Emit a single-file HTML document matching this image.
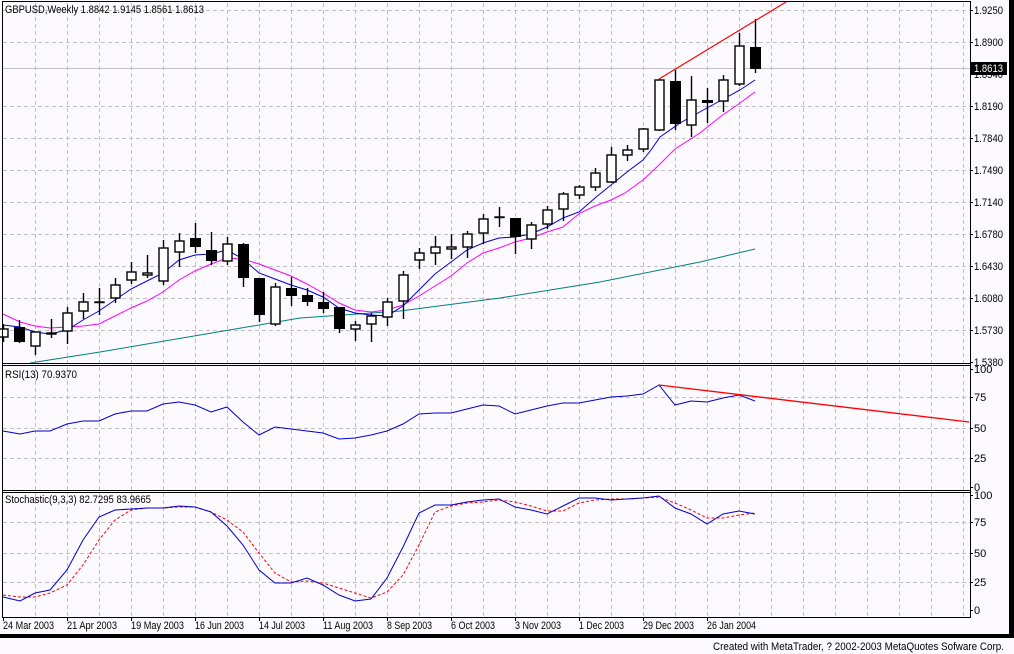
<!DOCTYPE html>
<html><head><meta charset="utf-8"><style>
html,body{margin:0;padding:0;background:#fcfaff;}
svg{display:block;font-family:"Liberation Sans",sans-serif;font-size:11px;}
</style></head><body>
<svg width="1014" height="654" viewBox="0 0 1014 654" xmlns="http://www.w3.org/2000/svg">
<rect width="1014" height="654" fill="#fcfaff"/>
<g stroke="#c0c0c0" stroke-dasharray="4,3" stroke-width="1">
<path d="M35.5 3V617M67.5 3V617M99.5 3V617M131.5 3V617M163.5 3V617M195.5 3V617M227.5 3V617M259.5 3V617M291.5 3V617M323.5 3V617M355.5 3V617M387.5 3V617M419.5 3V617M451.5 3V617M483.5 3V617M515.5 3V617M547.5 3V617M579.5 3V617M611.5 3V617M643.5 3V617M675.5 3V617M707.5 3V617M739.5 3V617M771.5 3V617M803.5 3V617M835.5 3V617M867.5 3V617M899.5 3V617M931.5 3V617M963.5 3V617"/>
<path d="M3 10.5H970M3 42.5H970M3 106.5H970M3 138.5H970M3 170.5H970M3 202.5H970M3 234.5H970M3 266.5H970M3 298.5H970M3 330.5H970"/>
<path d="M3 397.5H970M3 428.5H970M3 458.5H970"/>
<path d="M3 522.5H970M3 553.5H970M3 582.5H970"/>
</g>
<path d="M3 68.5H970" stroke="#c0c0c0"/>
<polyline fill="none" stroke="#008080" stroke-width="1" points="30,363 100,352 200,335 300,318 400,311 500,298 600,282 700,262 755,249"/>
<polyline fill="none" stroke="#ff00ff" stroke-width="1" points="3,314 20,322 35,326 50,328 67,327 83,326 99,324 115,316 131,308 147,301 163,292 179,280 195,271 211,264 227,258 243,259 259,264 275,270 291,276 307,284 323,293 339,303 355,310 371,312 387,310 403,305 419,296 435,286 451,276 467,263 483,253 499,248 515,242 531,238 547,232 563,227 580,213 595,206 611,200 625,193 643,180 659,165 675,149 700,133 720,117 740,103 755,92"/>
<polyline fill="none" stroke="#0000cc" stroke-width="1" points="3,325 20,327 35,332 50,334 67,330 83,320 99,311 115,300 131,289 147,281 163,273 179,260 195,255 211,254 227,250 243,259 259,273 275,279 291,285 307,290 323,297 339,308 355,313 371,315 387,316 403,306 419,290 435,274 451,262 467,250 483,243 499,238 515,237 531,234 547,227 563,218 579,212 595,198 611,185 627,172 643,160 651,150 660,137 680,123 707,108 740,90 755,80"/>
<g stroke="#000" stroke-width="1.4">
<path d="M3.5 324V342M19.5 320V343M35.5 332V355M51.5 319V338M67.5 307V344M83.5 293V319M99.5 288V315M115.5 278V303M131.5 262V284M147.5 255V278M163.5 240V285M179.5 233V267M195.5 223V253M211.5 232V265M227.5 237V265M243.5 243V287M259.5 278V322M275.5 283V326M291.5 277V306M307.5 288V306M323.5 292V313M339.5 307V333M355.5 321V341M371.5 313V342M387.5 298V326M403.5 271V319M419.5 248V269M435.5 236V265M451.5 234V259M467.5 231V258M483.5 214V244M499.5 207V227M515.5 218V254M531.5 222V249M547.5 206V229M563.5 192V221M579.5 185V199M595.5 168V191M611.5 147V183M627.5 145V161M643.5 128V152M659.5 79V131M675.5 70V130M691.5 76V137M707.5 88V123M723.5 75V112M739.5 33V86M755.5 19V73"/>
</g>
<g stroke="#000" stroke-width="1.4" fill="#fff">
<rect x="-1" y="329" width="9" height="8"/>
<rect x="31" y="332" width="9" height="14"/>
<rect x="47" y="333" width="9" height="1"/>
<rect x="63" y="313" width="9" height="18"/>
<rect x="79" y="302" width="9" height="9"/>
<rect x="95" y="302" width="9" height="0.5"/>
<rect x="111" y="285" width="9" height="13"/>
<rect x="127" y="272" width="9" height="8"/>
<rect x="143" y="273" width="9" height="2"/>
<rect x="159" y="248" width="9" height="33"/>
<rect x="175" y="241" width="9" height="11"/>
<rect x="223" y="244" width="9" height="17"/>
<rect x="271" y="287" width="9" height="37"/>
<rect x="351" y="325" width="9" height="4"/>
<rect x="367" y="316" width="9" height="8"/>
<rect x="383" y="302" width="9" height="15"/>
<rect x="399" y="275" width="9" height="26"/>
<rect x="415" y="253" width="9" height="7"/>
<rect x="431" y="247" width="9" height="6"/>
<rect x="447" y="247" width="9" height="2"/>
<rect x="463" y="234" width="9" height="13"/>
<rect x="479" y="219" width="9" height="14"/>
<rect x="495" y="217" width="9" height="0.5"/>
<rect x="527" y="225" width="9" height="14"/>
<rect x="543" y="210" width="9" height="14"/>
<rect x="559" y="194" width="9" height="15"/>
<rect x="575" y="187" width="9" height="8"/>
<rect x="591" y="173" width="9" height="14"/>
<rect x="607" y="155" width="9" height="27"/>
<rect x="623" y="150" width="9" height="5"/>
<rect x="639" y="129" width="9" height="20"/>
<rect x="655" y="80" width="9" height="50"/>
<rect x="687" y="100" width="9" height="25"/>
<rect x="719" y="80" width="9" height="21"/>
<rect x="735" y="46" width="9" height="38"/>
</g>
<g fill="#000">
<rect x="14" y="327" width="11" height="15"/>
<rect x="190" y="238" width="11" height="9"/>
<rect x="206" y="250" width="11" height="11"/>
<rect x="238" y="244" width="11" height="34"/>
<rect x="254" y="278" width="11" height="37"/>
<rect x="286" y="288" width="11" height="8"/>
<rect x="302" y="295" width="11" height="7"/>
<rect x="318" y="302" width="11" height="7"/>
<rect x="334" y="307" width="11" height="22"/>
<rect x="510" y="218" width="11" height="19"/>
<rect x="670" y="81" width="11" height="43"/>
<rect x="702" y="100" width="11" height="3"/>
<rect x="750" y="47" width="11" height="22"/>
</g>
<line x1="659" y1="79" x2="786" y2="2" stroke="#ff0000" stroke-width="1.2"/>
<polyline fill="none" stroke="#0000cc" stroke-width="1" points="3,431 20,434 35,431 50,431 67,424 83,421 99,421 115,414 131,411 147,411 163,404 179,402 195,405 211,412 227,407 243,422 259,435 275,427 291,429 307,431 323,433 339,439 355,438 371,435 387,431 403,424 419,414 435,413 451,413 467,409 483,405 499,406 515,414 531,410 547,406 563,403 579,403 595,400 611,397 627,396 643,394 659,385 675,405 691,401 707,402 723,398 739,395 755,401"/>
<line x1="659" y1="385" x2="969" y2="422" stroke="#ff0000" stroke-width="1.3"/>
<polyline fill="none" stroke="#ff0000" stroke-width="1" stroke-dasharray="3,2" points="3,595 20,597 35,597 50,593 67,585 83,565 99,540 115,520 131,510 147,508 163,508 179,507 195,507 211,512 227,520 243,532 259,553 275,573 291,582 307,581 323,583 339,588 355,593 371,598 387,592 403,575 419,545 435,512 451,506 467,503 483,502 499,500 515,502 531,506 547,511 563,511 579,503 595,500 611,499 627,499 643,498 659,497 675,503 691,510 707,518 723,518 739,515 755,513"/>
<polyline fill="none" stroke="#0000cc" stroke-width="1" points="3,597 20,601 35,593 50,590 67,570 83,540 99,517 115,510 131,509 147,508 163,508 179,506 195,507 211,512 227,526 243,545 259,570 275,583 291,583 307,578 323,585 339,595 355,601 371,599 387,578 403,547 419,513 435,505 451,505 467,502 483,500 499,499 515,507 531,510 547,514 563,506 579,498 595,498 611,500 627,499 643,498 659,496 675,508 691,514 707,524 723,514 739,511 755,514"/>
<g stroke="#000" stroke-width="1" fill="none">
<path d="M2.5 1V618M970.5 1V618M2 1.5H971M2 363.5H971M2 365.5H971M2 490.5H971M2 492.5H971M2 617.5H971"/>
<path d="M970 10.5h3M970 42.5h3M970 74.5h3M970 106.5h3M970 138.5h3M970 170.5h3M970 202.5h3M970 234.5h3M970 266.5h3M970 298.5h3M970 330.5h3M970 362.5h3M970 369.5h3M970 397.5h3M970 428.5h3M970 458.5h3M970 487.5h3M970 495.5h3M970 522.5h3M970 553.5h3M970 582.5h3M970 610.5h3"/>
<path d="M3.5 617v4M67.5 617v4M131.5 617v4M195.5 617v4M259.5 617v4M323.5 617v4M387.5 617v4M451.5 617v4M515.5 617v4M579.5 617v4M643.5 617v4M707.5 617v4"/>
</g>
<g fill="#000">
<text x="5" y="13" textLength="199" lengthAdjust="spacingAndGlyphs">GBPUSD,Weekly  1.8842 1.9145 1.8561 1.8613</text>
<text x="5" y="378" textLength="72" lengthAdjust="spacingAndGlyphs">RSI(13) 70.9370</text>
<text x="5" y="503" textLength="146" lengthAdjust="spacingAndGlyphs">Stochastic(9,3,3) 82.7295 83.9665</text>
<g>
<text x="974" y="14" textLength="29" lengthAdjust="spacingAndGlyphs">1.9250</text><text x="974" y="46" textLength="29" lengthAdjust="spacingAndGlyphs">1.8900</text><text x="974" y="78" textLength="29" lengthAdjust="spacingAndGlyphs">1.8540</text><text x="974" y="110" textLength="29" lengthAdjust="spacingAndGlyphs">1.8190</text><text x="974" y="142" textLength="29" lengthAdjust="spacingAndGlyphs">1.7840</text><text x="974" y="174" textLength="29" lengthAdjust="spacingAndGlyphs">1.7490</text><text x="974" y="206" textLength="29" lengthAdjust="spacingAndGlyphs">1.7140</text><text x="974" y="238" textLength="29" lengthAdjust="spacingAndGlyphs">1.6780</text><text x="974" y="270" textLength="29" lengthAdjust="spacingAndGlyphs">1.6430</text><text x="974" y="302" textLength="29" lengthAdjust="spacingAndGlyphs">1.6080</text><text x="974" y="334" textLength="29" lengthAdjust="spacingAndGlyphs">1.5730</text><text x="974" y="366" textLength="29" lengthAdjust="spacingAndGlyphs">1.5380</text>
</g>
<text x="974" y="373">100</text><text x="974" y="401">75</text><text x="974" y="432">50</text><text x="974" y="462">25</text><text x="974" y="491">0</text>
<text x="974" y="499">100</text><text x="974" y="526">75</text><text x="974" y="557">50</text><text x="974" y="586">25</text><text x="974" y="614">0</text>
<text x="3" y="629" textLength="51" lengthAdjust="spacingAndGlyphs">24 Mar 2003</text>
<text x="67" y="629" textLength="50" lengthAdjust="spacingAndGlyphs">21 Apr 2003</text>
<text x="131" y="629" textLength="53" lengthAdjust="spacingAndGlyphs">19 May 2003</text>
<text x="195" y="629" textLength="49" lengthAdjust="spacingAndGlyphs">16 Jun 2003</text>
<text x="259" y="629" textLength="46" lengthAdjust="spacingAndGlyphs">14 Jul 2003</text>
<text x="323" y="629" textLength="50" lengthAdjust="spacingAndGlyphs">11 Aug 2003</text>
<text x="387" y="629" textLength="45" lengthAdjust="spacingAndGlyphs">8 Sep 2003</text>
<text x="451" y="629" textLength="44" lengthAdjust="spacingAndGlyphs">6 Oct 2003</text>
<text x="515" y="629" textLength="46" lengthAdjust="spacingAndGlyphs">3 Nov 2003</text>
<text x="579" y="629" textLength="45" lengthAdjust="spacingAndGlyphs">1 Dec 2003</text>
<text x="643" y="629" textLength="51" lengthAdjust="spacingAndGlyphs">29 Dec 2003</text>
<text x="707" y="629" textLength="49" lengthAdjust="spacingAndGlyphs">26 Jan 2004</text>
</g>
<rect x="971" y="62" width="36" height="13" fill="#000"/>
<text x="974" y="72" fill="#fff" textLength="29" lengthAdjust="spacingAndGlyphs">1.8613</text>
<rect x="1009" y="0" width="5" height="638" fill="#000"/>
<rect x="0" y="634" width="1014" height="4" fill="#000"/>
<text x="713" y="650" fill="#000" textLength="291" lengthAdjust="spacingAndGlyphs">Created with MetaTrader, ? 2002-2003 MetaQuotes Sofware Corp.</text>
</svg>
</body></html>
